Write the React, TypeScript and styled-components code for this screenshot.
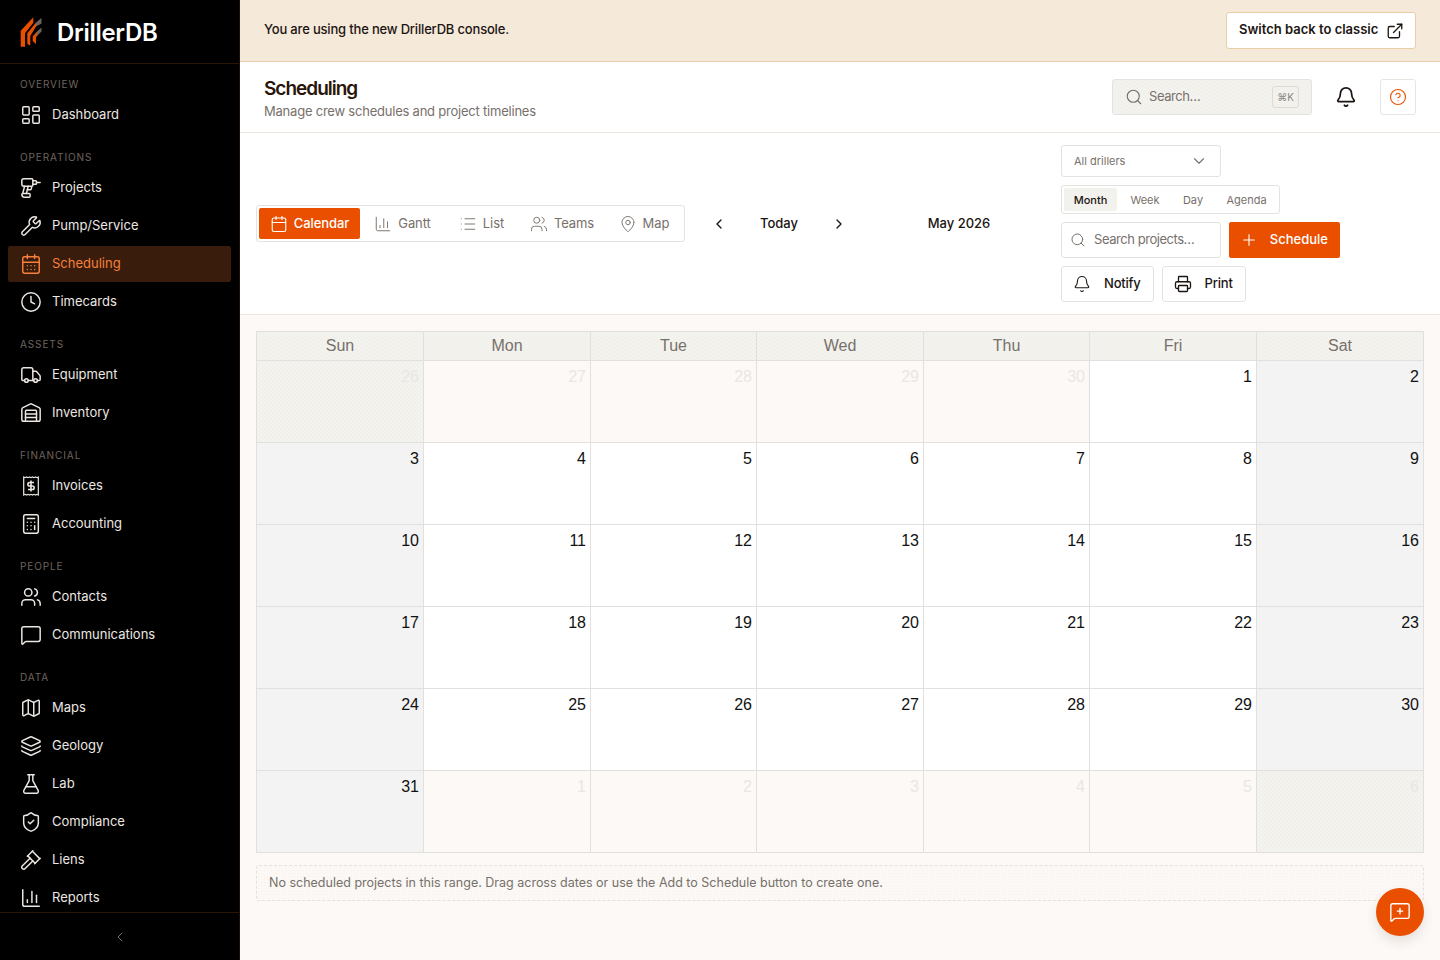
import React from "react";
import styled, { createGlobalStyle } from "styled-components";
import {
  LayoutDashboard,
  Drill,
  Wrench,
  CalendarDays,
  Calendar,
  Clock,
  Truck,
  Warehouse,
  Calculator,
  Users,
  MessageSquare,
  MessageSquarePlus,
  Map as MapIcon,
  Layers,
  FlaskConical,
  ShieldCheck,
  Gavel,
  ChartColumn,
  ChevronLeft,
  ChevronRight,
  ChevronDown,
  ExternalLink,
  Search,
  Bell,
  CircleHelp,
  List,
  MapPin,
  Plus,
  Printer,
} from "lucide-react";

const GlobalStyle = createGlobalStyle`
  html, body {
    margin: 0;
    padding: 0;
    height: 100%;
  }
  body {
    background: #fdf9f6;
    font-family: "Inter", "Liberation Sans", sans-serif;
    color: #1c1512;
  }
  * {
    box-sizing: border-box;
  }
`;

// the muted surfaces in the design have a fine dot grain
const grain = `
  background-color: #f4f3ef;
  background-image:
    radial-gradient(circle, #ecebe6 0.6px, transparent 0.8px),
    radial-gradient(circle, #ecebe6 0.6px, transparent 0.8px);
  background-size: 4px 4px;
  background-position: 0 0, 2px 2px;
`;

const Shell = styled.div`
  display: flex;
  height: 960px;
  overflow: hidden;
`;

const Sidebar = styled.aside`
  width: 240px;
  flex: none;
  height: 960px;
  background: #000;
  border-right: 1px solid #1c0f07;
  display: flex;
  flex-direction: column;
`;

const Brand = styled.div`
  height: 64px;
  flex: none;
  border-bottom: 1px solid #2a1509;
  display: flex;
  align-items: center;
  padding-left: 20px;
  gap: 15px;
`;

const BrandName = styled.span`
  color: #fff;
  font-size: 24px;
  font-weight: 600;
  letter-spacing: -0.3px;
  margin-top: 1px;
`;

const Nav = styled.nav`
  flex: 1;
  overflow: hidden;
  padding: 0 8px;
`;

const NavLabel = styled.div`
  height: 12px;
  margin: 14px 0 7px 12px;
  font-size: 10px;
  line-height: 12px;
  letter-spacing: 0.9px;
  color: #6f645e;
  font-weight: 400;
`;

const NavGroup = styled.div`
  margin-bottom: 18px;
`;

const NavItem = styled.div<{ $active?: boolean }>`
  height: 36px;
  margin-bottom: 2px;
  padding-left: 12px;
  display: flex;
  align-items: center;
  gap: 10px;
  font-size: 13px;
  font-weight: 400;
  border-radius: 2px;
  color: ${(p) => (p.$active ? "#f6803c" : "#ece7e2")};
  background: ${(p) => (p.$active ? "#3a1c0c" : "transparent")};
`;

const Collapse = styled.div`
  height: 48px;
  flex: none;
  border-top: 1px solid #2a1509;
  display: flex;
  align-items: center;
  justify-content: center;
  color: #7a6f69;
`;

const Main = styled.main`
  flex: 1;
  min-width: 0;
  display: flex;
  flex-direction: column;
`;

// Inter sits a little low next to the icons, this lifts a label by 1px
const Label = styled.span`
  margin-bottom: 2px;
`;

const Placeholder = styled(Label)`
  letter-spacing: -0.45px;
`;

const Banner = styled.div`
  height: 62px;
  flex: none;
  background: #f5e9da;
  border-bottom: 1px solid #e8cfa9;
  display: flex;
  align-items: center;
  justify-content: space-between;
  padding: 0 24px;
  font-size: 13px;
  font-weight: 500;
`;

const BannerText = styled.span`
  letter-spacing: -0.18px;
  margin-bottom: 3px;
`;

const ClassicLabel = styled.span`
  margin-bottom: 3px;
`;

const ClassicButton = styled.button`
  width: 190px;
  height: 37px;
  padding: 0 11px 0 12px;
  background: #fff;
  border: 1px solid #e8cfa9;
  border-radius: 3px;
  display: flex;
  align-items: center;
  justify-content: space-between;
  font: 600 13px "Inter", sans-serif;
  color: #1c1512;
`;

const PageHeader = styled.header`
  height: 71px;
  flex: none;
  background: #fff;
  border-bottom: 1px solid #ece5df;
  display: flex;
  align-items: center;
  justify-content: space-between;
  padding: 0 24px;
`;

const PageTitle = styled.h1`
  margin: 0;
  font-size: 19px;
  line-height: 26px;
  font-weight: 600;
  letter-spacing: -1px;
  color: #2a150a;
`;

const PageSub = styled.p`
  margin: 1px 0 0;
  font-size: 13px;
  line-height: 16px;
  letter-spacing: -0.22px;
  color: #77706b;
`;

const HeaderTools = styled.div`
  display: flex;
  align-items: center;
`;

const GlobalSearch = styled.div`
  ${grain}
  width: 200px;
  height: 36px;
  border: 1px solid #e5e3df;
  border-radius: 3px;
  display: flex;
  align-items: center;
  padding: 0 12px;
  gap: 6px;
  font-size: 13px;
  color: #77706b;
`;

const Kbd = styled.span`
  margin-left: auto;
  width: 27px;
  height: 22px;
  border: 1px solid #dedbd6;
  border-radius: 3px;
  display: flex;
  align-items: center;
  justify-content: center;
  font-size: 10px;
  color: #8d8781;
`;

const BellSlot = styled.div`
  width: 68px;
  display: flex;
  justify-content: center;
  color: #1c1512;
`;

const HelpButton = styled.div`
  width: 36px;
  height: 36px;
  border: 1px solid #e8e5e1;
  border-radius: 3px;
  display: flex;
  align-items: center;
  justify-content: center;
  color: #ea4f00;
`;

const Toolbar = styled.section`
  height: 182px;
  flex: none;
  background: #fff;
  border-bottom: 1px solid #ece5df;
  padding: 0 16px;
  display: flex;
  align-items: center;
`;

const ViewTabs = styled.div`
  width: 429px;
  height: 37px;
  border: 1px solid #e5e3df;
  border-radius: 3px;
  padding: 2px;
  display: flex;
  align-items: center;
`;

const ViewTab = styled.div<{ $active?: boolean; $w: number }>`
  width: ${(p) => p.$w}px;
  height: 31px;
  display: flex;
  align-items: center;
  justify-content: center;
  gap: 6px;
  font-size: 13px;
  letter-spacing: -0.08px;
  border-radius: 2px;
  color: ${(p) => (p.$active ? "#fff" : "#77706b")};
  background: ${(p) => (p.$active ? "#ea4f00" : "transparent")};
  font-weight: ${(p) => (p.$active ? 500 : 400)};
`;

const DateNav = styled.div`
  display: flex;
  align-items: center;
  margin-left: 16px;
  width: 156px;
  justify-content: space-between;
  font-size: 13px;
  font-weight: 500;
  color: #1c1512;
`;

const IconBtn = styled.div`
  width: 36px;
  height: 36px;
  display: flex;
  align-items: center;
  justify-content: center;
`;

const MonthTitle = styled.div`
  width: 180px;
  margin-left: 12px;
  margin-bottom: 2px;
  text-align: center;
  font-size: 13px;
  font-weight: 500;
`;

const ToolStack = styled.div`
  margin-left: 12px;
  display: flex;
  flex-direction: column;
  gap: 8px;
`;

const ToolRow = styled.div`
  display: flex;
  gap: 8px;
`;

const Select = styled.div`
  width: 160px;
  height: 32px;
  border: 1px solid #e5e3df;
  border-radius: 3px;
  display: flex;
  align-items: center;
  justify-content: space-between;
  padding: 0 12px;
  font-size: 11px;
  color: #77706b;
`;

const RangeTabs = styled.div`
  align-self: flex-start;
  width: 219px;
  height: 29px;
  border: 1px solid #e5e3df;
  border-radius: 3px;
  padding: 2px;
  display: flex;
  align-items: center;
  gap: 4px;
  font-size: 11px;
`;

const RangeTab = styled.div<{ $active?: boolean; $w: number }>`
  ${(p) => (p.$active ? grain : "")}
  width: ${(p) => p.$w}px;
  height: 23px;
  display: flex;
  align-items: center;
  justify-content: center;
  border-radius: 2px;
  color: ${(p) => (p.$active ? "#1c1512" : "#77706b")};
  font-weight: ${(p) => (p.$active ? 500 : 400)};
`;

const ProjectSearch = styled.div`
  width: 160px;
  height: 36px;
  border: 1px solid #e5e3df;
  border-radius: 3px;
  display: flex;
  align-items: center;
  gap: 8px;
  padding: 0 8px;
  font-size: 13px;
  color: #77706b;
`;

const PrimaryButton = styled.div`
  width: 111px;
  height: 36px;
  background: #ea4f00;
  color: #fff;
  border-radius: 2px;
  display: flex;
  align-items: center;
  justify-content: space-between;
  padding: 0 12px 0 11px;
  font-size: 13px;
  font-weight: 500;
`;

const GhostButton = styled.div`
  height: 36px;
  border: 1px solid #e5e3df;
  border-radius: 3px;
  display: flex;
  align-items: center;
  gap: 13px;
  padding: 0 12px 0 11px;
  font-size: 13px;
  font-weight: 500;
  letter-spacing: -0.2px;
  color: #1c1512;
`;

const Content = styled.div`
  flex: 1;
  padding: 16px;
  background: #fdf9f6;
  position: relative;
`;

const CalendarGrid = styled.div`
  display: grid;
  grid-template-columns: 167px 167px 166px 167px 166px 167px 167px;
  grid-template-rows: 29px repeat(6, 82px);
  border-top: 1px solid #e2e0dd;
  border-left: 1px solid #e2e0dd;
  font-family: "Liberation Sans", Arial, sans-serif;
`;

const DayHead = styled.div`
  ${grain}
  border-right: 1px solid #e2e0dd;
  border-bottom: 1px solid #e2e0dd;
  color: #77706b;
  font-size: 16px;
  display: flex;
  align-items: center;
  justify-content: center;
`;

const dayBg = (outside: boolean, weekend: boolean) => {
  if (outside && weekend) return grain;
  if (outside) return "background: #fdf9f6;";
  if (weekend) return "background: #f3f3f3;";
  return "background: #fff;";
};

const DayCell = styled.div<{ $outside: boolean; $weekend: boolean }>`
  ${(p) => dayBg(p.$outside, p.$weekend)}
  border-right: 1px solid #e2e0dd;
  border-bottom: 1px solid #e2e0dd;
  padding: 7px 4px 4px;
  text-align: right;
  font-size: 16px;
  line-height: 18px;
  color: ${(p) => (p.$outside ? "#e9e7e4" : "#111")};
`;

const EmptyNote = styled.div`
  margin-top: 12px;
  height: 36px;
  border: 1px dashed #e5e1dc;
  border-radius: 3px;
  background-color: #fbf8f5;
  background-image: radial-gradient(circle, #f6f3ef 0.6px, transparent 0.8px);
  background-size: 3px 3px;
  display: flex;
  align-items: center;
  padding: 0 12px;
  font-size: 12.5px;
  color: #77706b;
`;

const Fab = styled.div`
  position: absolute;
  right: 16px;
  bottom: 24px;
  width: 48px;
  height: 48px;
  border-radius: 50%;
  background: #ea4f00;
  color: #fff;
  display: flex;
  align-items: center;
  justify-content: center;
  box-shadow: 0 6px 12px rgba(60, 50, 40, 0.12);
`;

const Logo = () => (
  <svg width="22" height="30" viewBox="0 0 22 30">
    <path d="M0.7 13.7 L13.3 0.3 V5.7 L5 16.3 V29.7 H0.7 Z" fill="#ea4f00" />
    <path d="M7.3 16.3 L16 5.5 V9.5 L10.3 19 V28.5 L7.3 27 Z" fill="#ea4f00" />
    <path d="M16 5.5 L21.5 1 V6.5 L16 9.5 Z" fill="#6b6561" />
    <path d="M12.7 19.5 L17 14.5 V19 L16 20 V27 L12.7 24 Z" fill="#ea4f00" />
    <path d="M17 14.5 L21.5 10.5 V14.5 L17 19 Z" fill="#6b6561" />
  </svg>
);

const InvoiceIcon = () => (
  <svg width="22" height="22" viewBox="-1 -1 22 22" fill="none" stroke="currentColor" strokeWidth="1.6">
    <path
      d="M2.7 1 L4 1.7 L5.5 1 L7 1.7 L8.5 1 L10 1.7 L11.5 1 L13 1.7 L14.5 1 L16 1.7 L17.3 1 V19 L16 18.3 L14.5 19 L13 18.3 L11.5 19 L10 18.3 L8.5 19 L7 18.3 L5.5 19 L4 18.3 L2.7 19 Z"
      strokeWidth="1.2"
    />
    <path d="M13 6.5 H8.6 A1.75 1.75 0 0 0 8.6 10 H11.4 A1.75 1.75 0 0 1 11.4 13.5 H7 M10 4.5 V15.5" />
  </svg>
);

const navIcon = { size: 22, strokeWidth: 1.6 };

const navGroups = [
  { label: "OVERVIEW", items: [{ name: "Dashboard", icon: <LayoutDashboard {...navIcon} /> }] },
  {
    label: "OPERATIONS",
    items: [
      { name: "Projects", icon: <Drill {...navIcon} /> },
      { name: "Pump/Service", icon: <Wrench {...navIcon} /> },
      { name: "Scheduling", icon: <CalendarDays {...navIcon} />, active: true },
      { name: "Timecards", icon: <Clock {...navIcon} /> },
    ],
  },
  {
    label: "ASSETS",
    items: [
      { name: "Equipment", icon: <Truck {...navIcon} /> },
      { name: "Inventory", icon: <Warehouse {...navIcon} /> },
    ],
  },
  {
    label: "FINANCIAL",
    items: [
      { name: "Invoices", icon: <InvoiceIcon /> },
      { name: "Accounting", icon: <Calculator {...navIcon} /> },
    ],
  },
  {
    label: "PEOPLE",
    items: [
      { name: "Contacts", icon: <Users {...navIcon} /> },
      { name: "Communications", icon: <MessageSquare {...navIcon} /> },
    ],
  },
  {
    label: "DATA",
    items: [
      { name: "Maps", icon: <MapIcon {...navIcon} /> },
      { name: "Geology", icon: <Layers {...navIcon} /> },
      { name: "Lab", icon: <FlaskConical {...navIcon} /> },
      { name: "Compliance", icon: <ShieldCheck {...navIcon} /> },
      { name: "Liens", icon: <Gavel {...navIcon} /> },
      { name: "Reports", icon: <ChartColumn {...navIcon} /> },
    ],
  },
];

const weekdays = ["Sun", "Mon", "Tue", "Wed", "Thu", "Fri", "Sat"];

// May 2026 grid, starts on Sun 26 April
const days = [
  26, 27, 28, 29, 30, 1, 2,
  3, 4, 5, 6, 7, 8, 9,
  10, 11, 12, 13, 14, 15, 16,
  17, 18, 19, 20, 21, 22, 23,
  24, 25, 26, 27, 28, 29, 30,
  31, 1, 2, 3, 4, 5, 6,
];

const App = () => {
  return (
    <>
      <GlobalStyle />
      <Shell>
        <Sidebar>
          <Brand>
            <Logo />
            <BrandName>DrillerDB</BrandName>
          </Brand>
          <Nav>
            {navGroups.map((group) => (
              <NavGroup key={group.label}>
                <NavLabel>{group.label}</NavLabel>
                {group.items.map((item) => (
                  <NavItem key={item.name} $active={item.active}>
                    {item.icon}
                    <Label>{item.name}</Label>
                  </NavItem>
                ))}
              </NavGroup>
            ))}
          </Nav>
          <Collapse>
            <ChevronLeft size={16} strokeWidth={1.5} />
          </Collapse>
        </Sidebar>
        <Main>
          <Banner>
            <BannerText>You are using the new DrillerDB console.</BannerText>
            <ClassicButton>
              <ClassicLabel>Switch back to classic</ClassicLabel>
              <ExternalLink size={18} strokeWidth={1.75} />
            </ClassicButton>
          </Banner>
          <PageHeader>
            <div>
              <PageTitle>Scheduling</PageTitle>
              <PageSub>Manage crew schedules and project timelines</PageSub>
            </div>
            <HeaderTools>
              <GlobalSearch>
                <Search size={18} strokeWidth={1.5} />
                <Placeholder>Search…</Placeholder>
                <Kbd>⌘K</Kbd>
              </GlobalSearch>
              <BellSlot>
                <Bell size={22} strokeWidth={1.9} />
              </BellSlot>
              <HelpButton>
                <CircleHelp size={18} strokeWidth={1.5} />
              </HelpButton>
            </HeaderTools>
          </PageHeader>
          <Toolbar>
            <ViewTabs>
              <ViewTab $active $w={101}>
                <Calendar size={18} strokeWidth={1.5} />
                <Label>Calendar</Label>
              </ViewTab>
              <ViewTab $w={85}>
                <ChartColumn size={18} strokeWidth={1.25} />
                <Label>Gantt</Label>
              </ViewTab>
              <ViewTab $w={73}>
                <List size={18} strokeWidth={1.25} />
                <Label>List</Label>
              </ViewTab>
              <ViewTab $w={88}>
                <Users size={18} strokeWidth={1.25} />
                <Label>Teams</Label>
              </ViewTab>
              <ViewTab $w={76}>
                <MapPin size={18} strokeWidth={1.25} />
                <Label>Map</Label>
              </ViewTab>
            </ViewTabs>
            <DateNav>
              <IconBtn>
                <ChevronLeft size={16} strokeWidth={2} />
              </IconBtn>
              <Label>Today</Label>
              <IconBtn>
                <ChevronRight size={16} strokeWidth={2} />
              </IconBtn>
            </DateNav>
            <MonthTitle>May 2026</MonthTitle>
            <ToolStack>
              <Select>
                All drillers
                <ChevronDown size={18} strokeWidth={1.5} />
              </Select>
              <RangeTabs>
                <RangeTab $active $w={53}>Month</RangeTab>
                <RangeTab $w={48}>Week</RangeTab>
                <RangeTab $w={40}>Day</RangeTab>
                <RangeTab $w={59}>Agenda</RangeTab>
              </RangeTabs>
              <ToolRow>
                <ProjectSearch>
                  <Search size={16} strokeWidth={1.5} />
                  <Placeholder>Search projects…</Placeholder>
                </ProjectSearch>
                <PrimaryButton>
                  <Plus size={18} strokeWidth={1.5} />
                  <Label>Schedule</Label>
                </PrimaryButton>
              </ToolRow>
              <ToolRow>
                <GhostButton>
                  <Bell size={18} strokeWidth={1.5} />
                  <Label>Notify</Label>
                </GhostButton>
                <GhostButton>
                  <Printer size={18} strokeWidth={1.75} />
                  <Label>Print</Label>
                </GhostButton>
              </ToolRow>
            </ToolStack>
          </Toolbar>
          <Content>
            <CalendarGrid>
              {weekdays.map((d) => (
                <DayHead key={d}>{d}</DayHead>
              ))}
              {days.map((d, i) => (
                <DayCell
                  key={i}
                  $outside={i < 5 || i > 35}
                  $weekend={i % 7 === 0 || i % 7 === 6}
                >
                  {d}
                </DayCell>
              ))}
            </CalendarGrid>
            <EmptyNote>
              <Label>No scheduled projects in this range. Drag across dates or use the Add to Schedule button to create one.</Label>
            </EmptyNote>
            <Fab>
              <MessageSquarePlus size={22} strokeWidth={1.5} />
            </Fab>
          </Content>
        </Main>
      </Shell>
    </>
  );
};

export default App;
